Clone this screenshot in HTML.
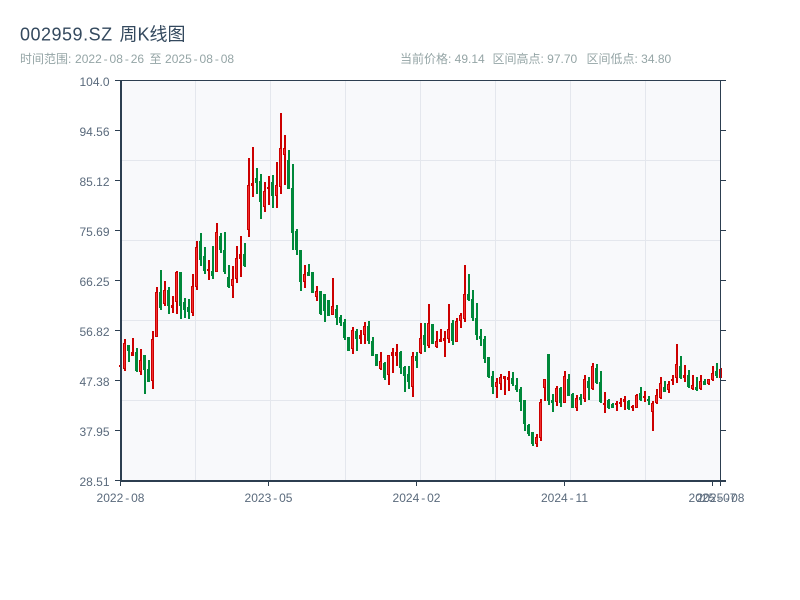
<!DOCTYPE html>
<html lang="zh">
<head>
<meta charset="utf-8">
<title>002959.SZ 周K线图</title>
<style>
html,body{margin:0;padding:0;background:#fff;width:800px;height:600px;overflow:hidden}
svg{display:block}
text{font-family:"Liberation Sans","Noto Sans CJK SC",sans-serif}
</style>
</head>
<body>
<svg width="800" height="600" viewBox="0 0 800 600" xmlns="http://www.w3.org/2000/svg">
<rect x="0" y="0" width="800" height="600" fill="#fff"/>
<text x="20" y="40.5" font-size="18" fill="#34495e" letter-spacing="0.5">002959.SZ</text>
<text x="119.5" y="40.5" font-size="18" fill="#34495e">周K线图</text>
<g font-size="12" fill="#95a5a6">
<text x="20" y="63">时间范围:</text>
<text x="75" y="63" dx="0 0 0 0 1.9 1.9 0 1.9 1.9 0">2022-08-26</text>
<text x="149.5" y="63">至</text>
<text x="165" y="63" dx="0 0 0 0 1.9 1.9 0 1.9 1.9 0">2025-08-08</text>
<text x="400" y="63">当前价格: 49.14</text>
<text x="492.5" y="63">区间高点: 97.70</text>
<text x="586.5" y="63">区间低点: 34.80</text>
</g>
<rect x="121" y="81" width="600" height="400" fill="#f8f9fb"/>
<path fill="none" stroke="#e4e7ed" stroke-width="1" d="M195.5 81V481M270.5 81V481M345.5 81V481M420.5 81V481M495.5 81V481M570.5 81V481M645.5 81V481M121 160.5H721M121 240.5H721M121 320.5H721M121 400.5H721"/>
<path fill="none" stroke="#cc0000" stroke-width="2" d="M125 339V371M133 338V356M141 349V375M153 331V389M157 287V337M165 281V306M173 296V313M177 271V314M193 274V316M197 241V290M209 260V280M217 223V272M233 266V298M237 246V283M241 236V277M249 158V237M253 147V197M265 182V212M269 176V205M277 162V208M281 113V194M285 135V185M305 265V288M317 286V301M333 278V315M353 327V354M361 330V344M365 322V344M381 352V370M389 355V385M393 348V373M397 344V366M413 352V397M421 323V354M429 304V348M437 331V348M441 329V342M445 331V357M449 304V343M457 318V342M461 313V328M465 265V322M497 378V398M501 374V390M505 376V395M509 371V391M537 434V447M541 399V441M545 379V401M557 386V406M565 371V403M577 395V411M585 375V402M593 363V390M605 392V413M617 401V411M621 398V407M625 396V410M633 405V411M637 394V408M645 391V402M653 401V431M657 389V404M661 377V399M669 381V393M673 375V385M677 344V383M685 365V382M693 375V390M701 375V390M709 379V385M713 366V381M721 368V378"/>
<path fill="none" stroke="#cc0000" stroke-width="3" d="M120.5 365V367M124.5 343V369M132.5 352V356M140.5 360V372M152.5 339V381M156.5 292V337M164.5 290V304M172.5 305V308M176.5 272V302M192.5 286V313M196.5 247V287M208.5 269V271M216.5 232V272M232.5 279V286M236.5 258V279M240.5 254V259M248.5 185V230M252.5 183V186M264.5 191V207M268.5 187V189M276.5 185V196M280.5 148V187M284.5 148V155M304.5 274V282M316.5 291V297M332.5 306V315M352.5 330V349M360.5 335V339M364.5 326V335M380.5 361V369M388.5 355V375M392.5 352V356M396.5 352V356M412.5 356V387M420.5 338V353M428.5 323V346M436.5 341V347M440.5 339V342M444.5 338V341M448.5 329V339M456.5 321V342M460.5 315V321M464.5 294V319M496.5 382V387M500.5 377V384M504.5 376V379M508.5 377V380M536.5 437V444M540.5 402V438M544.5 379V388M556.5 388V402M564.5 376V403M576.5 398V408M584.5 379V399M592.5 366V389M604.5 403V405M616.5 403V405M620.5 402V404M624.5 399V402M632.5 406V408M636.5 395V408M644.5 396V398M652.5 403V412M656.5 395V403M660.5 383V398M668.5 384V390M672.5 379V381M676.5 364V378M684.5 375V378M692.5 385V389M700.5 381V389M708.5 379V384M712.5 373V380M720.5 369V378"/>
<path fill="none" stroke="#f03030" stroke-width="1" d="M124.5 344V368M140.5 361V371M152.5 340V380M156.5 293V336M164.5 291V303M176.5 273V301M192.5 287V312M196.5 248V286M216.5 233V271M232.5 280V285M236.5 259V278M248.5 186V229M264.5 192V206M276.5 186V195M280.5 149V186M284.5 149V154M304.5 275V281M316.5 292V296M332.5 307V314M352.5 331V348M364.5 327V334M380.5 362V368M388.5 356V374M412.5 357V386M420.5 339V352M428.5 324V345M436.5 342V346M448.5 330V338M456.5 322V341M460.5 316V320M464.5 295V318M496.5 383V386M500.5 378V383M536.5 438V443M540.5 403V437M544.5 380V387M556.5 389V401M564.5 377V402M576.5 399V407M584.5 380V398M592.5 367V388M636.5 396V407M652.5 404V411M656.5 396V402M660.5 384V397M668.5 385V389M676.5 365V377M692.5 386V388M700.5 382V388M708.5 380V383M712.5 374V379"/>
<path fill="none" stroke="#00883a" stroke-width="2" d="M129 345V362M137 348V372M145 355V394M149 360V382M161 270V310M169 287V314M181 272V319M185 298V318M189 299V319M201 233V266M205 247V274M213 246V279M221 233V253M225 232V274M229 265V288M245 243V267M257 168V194M261 174V219M273 175V208M289 150V189M293 164V250M297 229V255M301 250V291M309 264V276M313 272V293M321 291V315M325 294V322M329 300V316M337 305V325M341 315V326M345 319V340M349 337V351M357 329V351M369 321V344M373 337V356M377 354V366M385 362V380M401 351V374M405 366V392M409 366V389M417 352V368M425 323V352M433 324V344M453 320V345M469 274V301M473 290V321M477 303V340M481 329V346M485 336V363M489 357V378M493 371V394M513 372V386M517 378V392M521 387V411M525 400V431M529 424V436M533 432V446"/>
<path fill="none" stroke="#00883a" stroke-width="2" d="M549 354V405M553 394V412M561 387V407M569 374V396M573 393V408M581 394V405M589 377V400M597 364V384M601 371V403M609 399V409M613 403V408M629 400V410M641 387V401M649 396V405M665 381V392M681 356V379M689 370V388M697 377V391M705 379V385M717 363V378"/>
<path fill="none" stroke="#00883a" stroke-width="3" d="M128.5 345V351M136.5 352V371M144.5 355V370M148.5 369V382M160.5 292V308M168.5 290V306M180.5 272V306M184.5 302V310M188.5 307V312M200.5 241V260M204.5 256V271M212.5 271V276M220.5 236V250M224.5 250V272M228.5 277V287M244.5 254V266M256.5 178V183M260.5 181V202M272.5 182V196M288.5 160V189M292.5 188V233M296.5 231V250M300.5 250V282M308.5 272V276M312.5 272V293M320.5 291V314M324.5 294V311M328.5 300V316M336.5 309V318M340.5 317V323M344.5 322V338M348.5 337V351M356.5 331V339M368.5 326V341M372.5 341V356M376.5 354V366M384.5 363V378M400.5 352V368M404.5 367V376M408.5 374V382M416.5 356V361M424.5 335V345M432.5 324V344M452.5 323V341M468.5 294V300M472.5 299V318M476.5 318V335M480.5 336V339M484.5 339V359M488.5 357V377M492.5 376V387M512.5 378V384M516.5 385V390M520.5 389V402M524.5 400V424M528.5 425V434M532.5 432V444"/>
<path fill="none" stroke="#00883a" stroke-width="3" d="M548.5 354V401M552.5 400V403M560.5 388V403M568.5 379V396M572.5 394V408M580.5 397V400M588.5 381V388M596.5 368V383M600.5 382V402M608.5 400V408M612.5 404V408M628.5 401V409M640.5 393V400M648.5 399V401M664.5 387V392M680.5 366V378M688.5 375V387M696.5 387V390M704.5 381V385M716.5 371V376"/>
<path fill="none" stroke="#2c3e50" stroke-width="1" d="M115 80.5H726M720.5 81V481M115 130.5H120M115 180.5H120M115 230.5H120M115 280.5H120M115 330.5H120M115 380.5H120M115 430.5H120M115 480.5H120M721 130.5H726M721 180.5H726M721 230.5H726M721 280.5H726M721 330.5H726M721 380.5H726M721 430.5H726M721 480.5H726M268.5 482V486M416.5 482V486M564.5 482V486M712.5 482V486M720.5 482V486M120.5 482V486"/>
<path fill="none" stroke="#2c3e50" stroke-width="2" d="M121 80V482M120 481H726"/>
<g font-size="12" fill="#5a6a7c" text-anchor="end">
<text x="109.5" y="86">104.0</text>
<text x="109.5" y="136">94.56</text>
<text x="109.5" y="186">85.12</text>
<text x="109.5" y="236">75.69</text>
<text x="109.5" y="286">66.25</text>
<text x="109.5" y="336">56.82</text>
<text x="109.5" y="386">47.38</text>
<text x="109.5" y="436">37.95</text>
<text x="109.5" y="486">28.51</text>
</g>
<g font-size="12" fill="#5a6a7c" text-anchor="middle">
<text x="120.5" y="502" dx="0 0 0 0 1.9 1.9 0">2022-08</text>
<text x="268.5" y="502" dx="0 0 0 0 1.9 1.9 0">2023-05</text>
<text x="416.5" y="502" dx="0 0 0 0 1.9 1.9 0">2024-02</text>
<text x="564.5" y="502" dx="0 0 0 0 1.9 1.9 0">2024-11</text>
<text x="712.5" y="502" dx="0 0 0 0 1.9 1.9 0">2025-07</text>
<text x="720.5" y="502" dx="0 0 0 0 1.9 1.9 0">2025-08</text>
</g>
</svg>
</body>
</html>
